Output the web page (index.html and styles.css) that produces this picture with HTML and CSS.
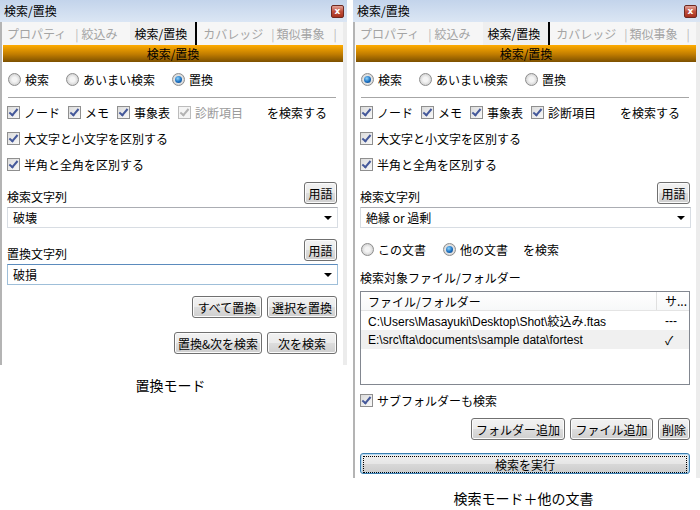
FILE: index.html
```html
<!DOCTYPE html>
<html lang="ja">

<head>
    <meta charset="UTF-8">
    <title>検索/置換</title>
    <link rel="stylesheet" href="styles.css">
</head>

<body>
    <div class="screens">
        <!-- 置換モード -->
        <div class="shot">
            <div class="window short">
                <div class="titlebar">
                    <span>検索/置換</span>
                    <span class="close">x</span>
                </div>
                <div class="tabs">
                    <span class="tab t1">プロパティ</span><span class="sep s1">|</span>
                    <span class="tab t2">絞込み</span>
                    <span class="tab active">検索/置換</span>
                    <span class="tab t4">カバレッジ</span><span class="sep s2">|</span>
                    <span class="tab t5">類似事象</span><span class="sep s3">|</span>
                </div>
                <div class="header">検索/置換</div>
                <div class="body">
                    <div class="radio-row">
                        <label class="opt"><span class="radio"></span>検索</label>
                        <label class="opt"><span class="radio"></span>あいまい検索</label>
                        <label class="opt"><span class="radio on"></span>置換</label>
                    </div>
                    <div class="rule"></div>
                    <div class="check-row">
                        <label class="opt"><span class="check on"></span>ノード</label>
                        <label class="opt"><span class="check on"></span>メモ</label>
                        <label class="opt"><span class="check on"></span>事象表</label>
                        <label class="opt disabled"><span class="check on"></span>診断項目</label>
                        <span class="suffix">を検索する</span>
                    </div>
                    <div class="check-row">
                        <label class="opt"><span class="check on"></span>大文字と小文字を区別する</label>
                    </div>
                    <div class="check-row">
                        <label class="opt"><span class="check on"></span>半角と全角を区別する</label>
                    </div>
                    <div class="field-head first">
                        <span>検索文字列</span>
                        <button class="btn small">用語</button>
                    </div>
                    <div class="combo">破壊<span class="arrow"></span></div>
                    <div class="field-head second">
                        <span>置換文字列</span>
                        <button class="btn small">用語</button>
                    </div>
                    <div class="combo focus">破損<span class="arrow"></span></div>
                    <div class="btn-row top">
                        <button class="btn w70">すべて置換</button>
                        <button class="btn w70">選択を置換</button>
                    </div>
                    <div class="btn-row next">
                        <button class="btn w88">置換&amp;次を検索</button>
                        <button class="btn w70">次を検索</button>
                    </div>
                </div>
            </div>
            <div class="caption">置換モード</div>
        </div>

        <!-- 検索モード＋他の文書 -->
        <div class="shot">
            <div class="window tall">
                <div class="titlebar">
                    <span>検索/置換</span>
                    <span class="close">x</span>
                </div>
                <div class="tabs">
                    <span class="tab t1">プロパティ</span><span class="sep s1">|</span>
                    <span class="tab t2">絞込み</span>
                    <span class="tab active">検索/置換</span>
                    <span class="tab t4">カバレッジ</span><span class="sep s2">|</span>
                    <span class="tab t5">類似事象</span><span class="sep s3">|</span>
                </div>
                <div class="header">検索/置換</div>
                <div class="body">
                    <div class="radio-row">
                        <label class="opt"><span class="radio on"></span>検索</label>
                        <label class="opt"><span class="radio"></span>あいまい検索</label>
                        <label class="opt"><span class="radio"></span>置換</label>
                    </div>
                    <div class="rule"></div>
                    <div class="check-row">
                        <label class="opt"><span class="check on"></span>ノード</label>
                        <label class="opt"><span class="check on"></span>メモ</label>
                        <label class="opt"><span class="check on"></span>事象表</label>
                        <label class="opt"><span class="check on"></span>診断項目</label>
                        <span class="suffix">を検索する</span>
                    </div>
                    <div class="check-row">
                        <label class="opt"><span class="check on"></span>大文字と小文字を区別する</label>
                    </div>
                    <div class="check-row">
                        <label class="opt"><span class="check on"></span>半角と全角を区別する</label>
                    </div>
                    <div class="field-head first">
                        <span>検索文字列</span>
                        <button class="btn small">用語</button>
                    </div>
                    <div class="combo">絶縁 or 過剰<span class="arrow"></span></div>
                    <div class="radio-row scope">
                        <label class="opt"><span class="radio"></span>この文書</label>
                        <label class="opt"><span class="radio on"></span>他の文書</label>
                        <span class="suffix">を検索</span>
                    </div>
                    <div class="list-label">検索対象ファイル/フォルダー</div>
                    <div class="list">
                        <div class="list-head">
                            <span class="col-path">ファイル/フォルダー</span>
                            <span class="col-sub">サ...</span>
                        </div>
                        <div class="list-item">
                            <span class="col-path">C:\Users\Masayuki\Desktop\Shot\絞込み.ftas</span>
                            <span class="col-sub">---</span>
                        </div>
                        <div class="list-item selected">
                            <span class="col-path">E:\src\fta\documents\sample data\fortest</span>
                            <span class="col-sub">✓</span>
                        </div>
                    </div>
                    <div class="check-row sub">
                        <label class="opt"><span class="check on"></span>サブフォルダーも検索</label>
                    </div>
                    <div class="btn-row files">
                        <button class="btn w94">フォルダー追加</button>
                        <button class="btn w83">ファイル追加</button>
                        <button class="btn w32">削除</button>
                    </div>
                    <button class="btn run"><span>検索を実行</span></button>
                </div>
            </div>
            <div class="caption">検索モード＋他の文書</div>
        </div>
    </div>
</body>

</html>
```

FILE: styles.css
```css
body {
    margin: 0;
    background-color: #ffffff;
    font-family: "Noto Sans CJK JP", "Noto Sans", sans-serif;
    font-size: 12px;
    color: #000000;
}

.screens {
    display: flex;
    gap: 6px;
}

.shot {
    width: 347px;
}

.window {
    background-color: #ffffff;
    border-left: 2px solid #b4b4b4;
    border-right: 4px solid #ececec;
    box-sizing: border-box;
}

.window.short {
    height: 365px;
}

.window.tall {
    height: 478px;
}

.titlebar {
    height: 22px;
    margin-left: -2px;
    margin-right: -4px;
    padding: 0 3px 0 4px;
    display: flex;
    align-items: center;
    justify-content: space-between;
    background: linear-gradient(#c3d4eb, #dbe6f4);
    line-height: 22px;
}

.close {
    width: 11px;
    height: 11px;
    border: 1px solid #6e2a22;
    border-radius: 2px;
    background: linear-gradient(#e2a49a, #c0503d 50%, #a8321f);
    color: #ffffff;
    font-family: "DejaVu Sans", sans-serif;
    font-size: 9px;
    font-weight: bold;
    line-height: 10px;
    text-align: center;
}

/* tab strip */
.tabs {
    height: 23px;
    display: flex;
    align-items: stretch;
    background-color: #f6f6f6;
    font-size: 12px;
    color: #a4a4a4;
    padding-left: 5px;
    white-space: nowrap;
    overflow: hidden;
}

.tab,
.sep {
    line-height: 23px;
    flex: none;
}

.sep {
    color: #b8b8b8;
}

.s1 {
    margin-left: 9px;
}

.t2 {
    margin-left: 3px;
}

.tab.active {
    color: #000000;
    background-color: #efefef;
    margin-left: 12px;
    padding: 0 8px 0 5px;
    border-right: 2px solid #000000;
}

.t4 {
    margin-left: 6px;
}

.s2 {
    margin-left: 8px;
}

.t5 {
    margin-left: 2px;
}

.s3 {
    margin-left: 9px;
}

.header {
    height: 17px;
    margin: 0 0 0 1px;
    background: linear-gradient(#ffac00, #c07c00 55%, #7c5000);
    text-align: center;
    line-height: 17px;
    font-size: 12px;
}

.body {
    padding: 0 5px 0 5px;
}

.opt {
    display: inline-flex;
    align-items: center;
    gap: 4px;
    white-space: nowrap;
}

.opt.disabled {
    color: #9a9a9a;
}

.radio-row {
    height: 26px;
    margin-top: 4px;
    display: flex;
    align-items: center;
    gap: 17px;
    padding-left: 1px;
}

.radio-row.scope {
    margin-top: 8px;
}

.radio {
    width: 11px;
    height: 11px;
    border: 1px solid #8d8d8d;
    border-radius: 50%;
    background: radial-gradient(circle at 50% 50%, #f4f4f4 30%, #cfcfcf 80%);
    display: inline-flex;
    align-items: center;
    justify-content: center;
}

.radio.on::after {
    content: "";
    width: 7px;
    height: 7px;
    border-radius: 50%;
    background: radial-gradient(circle at 40% 35%, #8fd4fb, #1a6fc0 55%, #0b3c78);
}

.rule {
    height: 1px;
    background-color: #a6a6a6;
    margin: 5px 2px 0 1px;
}

.check-row {
    height: 26px;
    display: flex;
    align-items: center;
    gap: 8px;
}

.rule + .check-row {
    margin-top: 1px;
}

.check {
    width: 11px;
    height: 11px;
    border: 1px solid #8f8f8f;
    background: linear-gradient(135deg, #dcdcdc, #f8f8f8);
    position: relative;
}

.check.on::after {
    content: "";
    position: absolute;
    left: 3px;
    top: 0px;
    width: 3px;
    height: 7px;
    border-right: 2px solid #44589a;
    border-bottom: 2px solid #44589a;
    transform: rotate(40deg);
}

.disabled .check {
    border-color: #bcbcbc;
    background: #f4f4f4;
}

.disabled .check.on::after {
    border-color: #b2b2b2;
}

.suffix {
    margin-left: 22px;
}

.check-row .suffix {
    margin-left: 16px;
}

.radio-row .suffix {
    margin-left: -2px;
}

.field-head {
    display: flex;
    justify-content: space-between;
    align-items: flex-end;
    height: 22px;
    margin-right: 1px;
    line-height: 14px;
}

.field-head.first {
    margin-top: 5px;
}

.field-head.second {
    margin-top: 11px;
}

.combo {
    height: 19px;
    margin-top: 3px;
    border: 1px solid #d8dde3;
    border-top-color: #abadb3;
    padding-left: 5px;
    line-height: 19px;
    display: flex;
    justify-content: space-between;
    align-items: center;
}

.combo.focus {
    border-color: #9fbfd9;
    border-top-color: #5b8bbd;
}

.arrow {
    width: 0;
    height: 0;
    border-left: 4px solid transparent;
    border-right: 4px solid transparent;
    border-top: 4px solid #000000;
    margin-right: 5px;
}

.btn {
    height: 22px;
    padding: 0;
    font-family: inherit;
    font-size: 12px;
    color: #000000;
    border: 1px solid #707070;
    border-radius: 3px;
    background: linear-gradient(#f2f2f2, #ebebeb 50%, #dddddd 51%, #cfcfcf);
    box-shadow: inset 0 0 0 1px #fbfbfb;
}

.btn.small {
    width: 33px;
}

.w70 {
    width: 70px;
}

.w88 {
    width: 88px;
}

.w94 {
    width: 94px;
}

.w83 {
    width: 83px;
}

.w32 {
    width: 32px;
}

.btn-row {
    display: flex;
    justify-content: flex-end;
    gap: 5px;
    margin-right: 1px;
}

.btn-row.top {
    margin-top: 11px;
}

.btn-row.next {
    margin-top: 14px;
}

.list-label {
    margin-top: 8px;
    line-height: 16px;
}

.list {
    height: 92px;
    margin-top: 5px;
    margin-right: 1px;
    border: 1px solid #828790;
}

.list-head {
    height: 18px;
    display: flex;
    align-items: center;
    border-bottom: 1px solid #e4e4e4;
    background: linear-gradient(#ffffff, #f7f8f9);
}

.list-head .col-sub {
    border-left: 1px solid #e0e0e0;
    height: 18px;
    line-height: 18px;
}

.list-item {
    height: 19px;
    display: flex;
    align-items: center;
    font-family: "Liberation Sans", "Noto Sans CJK JP", sans-serif;
}

.list-item.selected {
    background-color: #f0f0f0;
}

.col-path {
    width: 295px;
    padding-left: 7px;
    box-sizing: border-box;
    white-space: nowrap;
    overflow: hidden;
}

.col-sub {
    flex: 1;
    padding-left: 8px;
}

.list-item .col-sub {
    padding-left: 9px;
}

.check-row.sub {
    height: 20px;
    margin-top: 5px;
}

.btn-row.files {
    margin-top: 8px;
}

.btn.run {
    display: block;
    width: calc(100% - 1px);
    height: 21px;
    margin-top: 13px;
    padding: 2px;
    border-color: #3c7fb1;
    background: linear-gradient(#f0f0f0, #e6e6e6 50%, #d8d8d8 51%, #cccccc);
    box-shadow: inset 0 0 0 1px #b8dcf4;
}

.btn.run span {
    display: block;
    height: 15px;
    line-height: 15px;
    border: 1px dotted #000000;
}

.caption {
    text-align: center;
    font-size: 14px;
    line-height: 18px;
    margin-top: 11px;
    padding-right: 6px;
}
```
